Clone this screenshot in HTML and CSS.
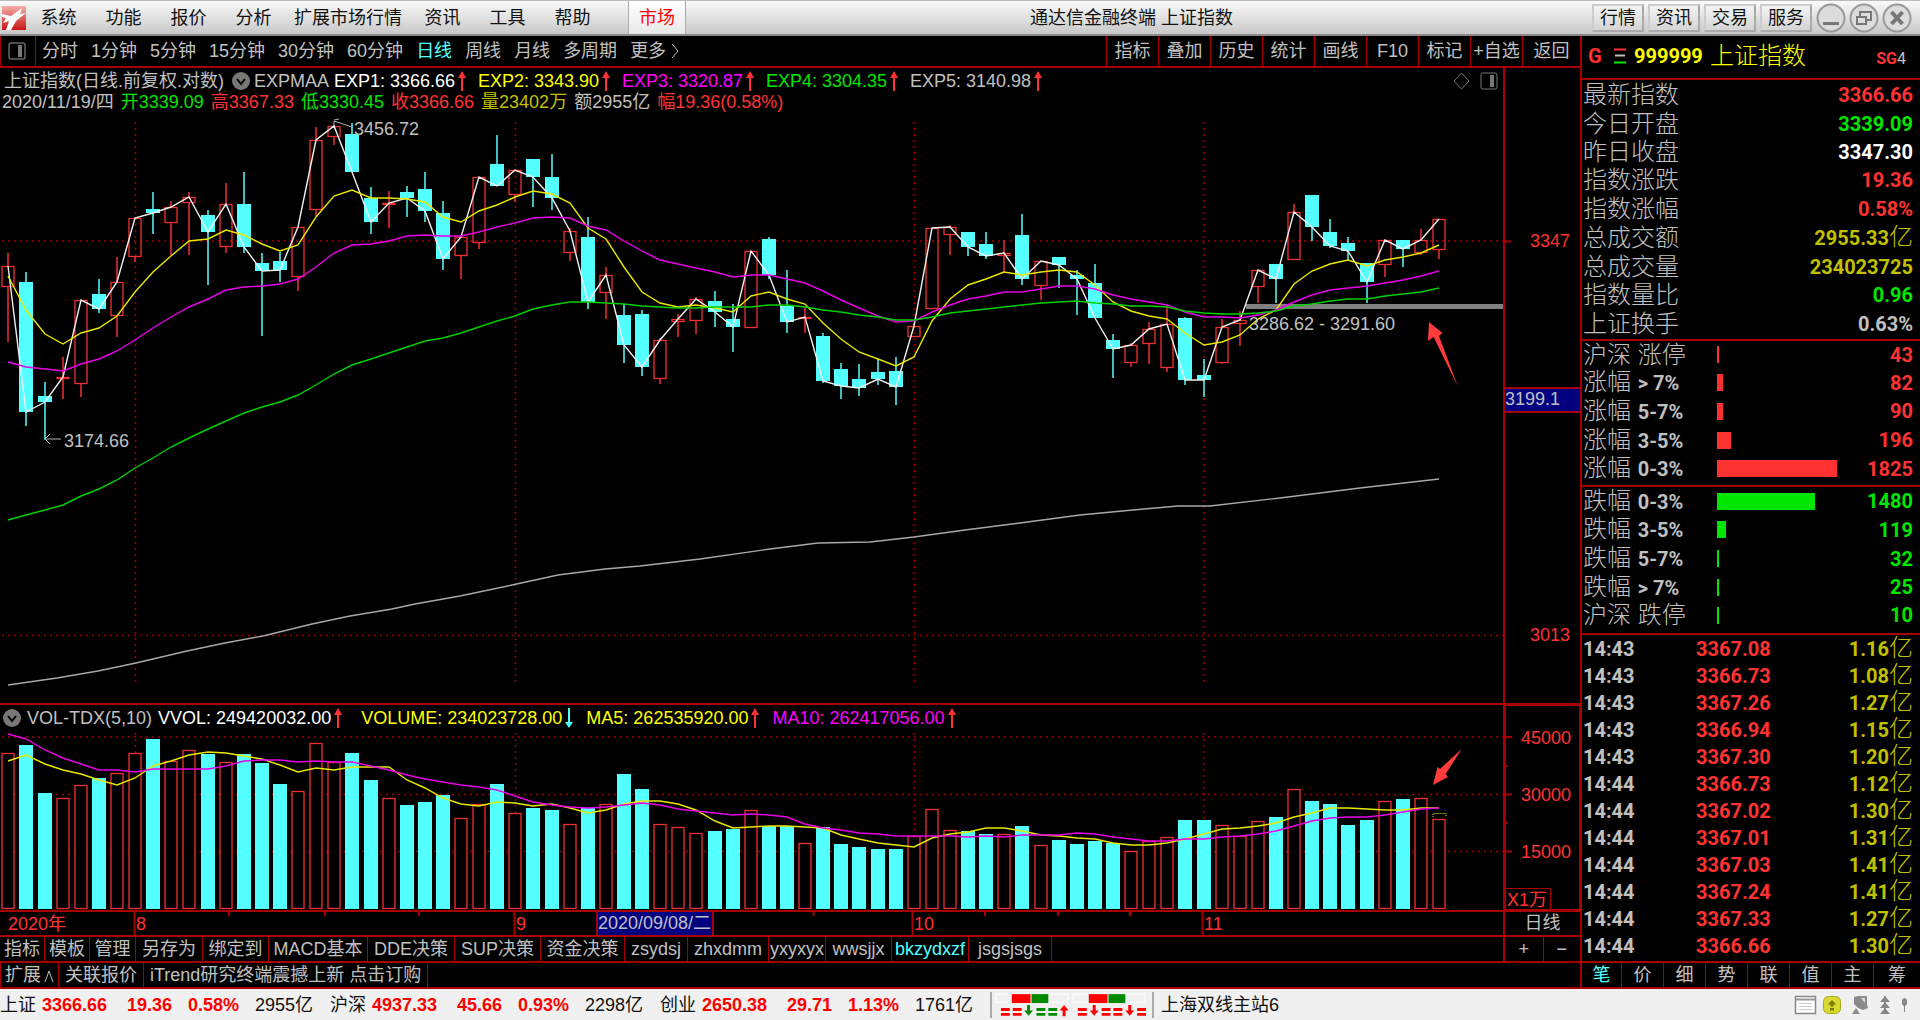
FILE: index.html
```html
<!DOCTYPE html>
<html lang="zh-CN">
<head>
<meta charset="utf-8">
<title>通达信金融终端 上证指数</title>
<link rel="stylesheet" href="styles.css">
</head>
<body>
<header class="menubar">
  <svg class="logo" viewBox="0 0 24 24" aria-hidden="true">
    <defs><linearGradient id="logoRed" x1="0" y1="0" x2="0" y2="1"><stop offset="0" stop-color="#f2b0a8"/><stop offset="1" stop-color="#c81414"/></linearGradient></defs>
    <rect width="24" height="24" fill="url(#logoRed)"/>
    <path d="M0 8 L9 10 L20 2 L18 8 L24 7 L14 15 L9 24 L4 24 L7 15 L1 17 L4 12 L0 11 Z" fill="#fff"/>
  </svg>
  <nav class="menu">
    <button>系统</button><button>功能</button><button>报价</button><button>分析</button><button>扩展市场行情</button><button>资讯</button><button>工具</button><button>帮助</button>
  </nav>
  <button class="market">市场</button>
  <h1 class="title">通达信金融终端 上证指数</h1>
  <div class="quick">
    <button>行情</button><button>资讯</button><button>交易</button><button>服务</button>
  </div>
  <div class="winctl">
    <button aria-label="最小化"><svg viewBox="0 0 30 30"><circle cx="15" cy="15" r="13.5"/><path class="thick" d="M7 20.500H23"/></svg></button>
    <button aria-label="还原"><svg viewBox="0 0 30 30"><circle cx="15" cy="15" r="13.5"/><path class="mid" d="M11 13V9H22V17H18M8 14H17V21H8Z"/></svg></button>
    <button aria-label="关闭"><svg viewBox="0 0 30 30"><circle cx="15" cy="15" r="13.5"/><path class="cross" d="M9.500 9L20.500 21M20.500 9L9.500 21"/></svg></button>
  </div>
</header>

<div class="workspace">
<main class="left">
  <div class="periods">
    <button class="dock" aria-label="面板"><svg viewBox="0 0 18 18"><rect x="1" y="1" width="16" height="16" rx="2" fill="none" stroke="#666" stroke-width="1.500"/><rect x="10" y="3" width="4" height="12" fill="#777"/></svg></button>
    <div class="periodlist">
      <button>分时</button><button>1分钟</button><button>5分钟</button><button>15分钟</button><button>30分钟</button><button>60分钟</button><button class="on">日线</button><button>周线</button><button>月线</button><button>多周期</button><button>更多 <svg class="more" viewBox="0 0 8 16"><path d="M1 1L7 8L1 15"/></svg></button>
    </div>
    <div class="tools">
      <button>指标</button><button>叠加</button><button>历史</button><button>统计</button><button>画线</button><button>F10</button><button>标记</button><button>+自选</button><button>返回</button>
    </div>
  </div>

  <section class="pane">
    <div class="plot">
      <div class="pricehead">
        <div class="line1">
          <span class="name">上证指数(日线.前复权.对数)</span>
          <svg class="chev" viewBox="0 0 18 18"><circle cx="9" cy="9" r="9"/><path d="M5 7L9 12L13 7"/></svg>
          <span class="exp">EXPMAA</span>
          <span class="ind white">EXP1: 3366.66<svg class="up" viewBox="0 0 8 20"><path d="M4 0L8 7H5V20H3V7H0Z"/></svg></span>
          <span class="ind yellow">EXP2: 3343.90<svg class="up" viewBox="0 0 8 20"><path d="M4 0L8 7H5V20H3V7H0Z"/></svg></span>
          <span class="ind magenta">EXP3: 3320.87<svg class="up" viewBox="0 0 8 20"><path d="M4 0L8 7H5V20H3V7H0Z"/></svg></span>
          <span class="ind green">EXP4: 3304.35<svg class="up" viewBox="0 0 8 20"><path d="M4 0L8 7H5V20H3V7H0Z"/></svg></span>
          <span class="ind">EXP5: 3140.98<svg class="up" viewBox="0 0 8 20"><path d="M4 0L8 7H5V20H3V7H0Z"/></svg></span>
          <svg class="corner" viewBox="0 0 46 20"><path d="M8.500 2L16 10L8.500 18L1 10Z"/><rect x="28" y="2" width="16" height="16" rx="2"/><rect x="37" y="4" width="4" height="12" fill="#777" stroke="none"/></svg>
        </div>
        <div class="line2">
          <span>2020/11/19/四</span><span class="green">开3339.09</span><span class="red">高3367.33</span><span class="green">低3330.45</span><span class="red">收3366.66</span><span class="olive">量23402万</span><span>额2955亿</span><span class="red">幅19.36(0.58%)</span>
        </div>
      </div>
      <svg class="chart" id="price" viewBox="0 110 1503 593"></svg>
    </div>
    <div class="axis">
      <svg class="chart" viewBox="1505 68 75 635">
        <path d="M1505 241.500H1511" stroke="#a80000" stroke-width="2"/>
        <text class="t red" x="1570" y="247" text-anchor="end">3347</text>
        <text class="t red" x="1570" y="641" text-anchor="end">3013</text>
        <rect x="1504" y="388" width="78" height="24" fill="#000080" stroke="#a80000" stroke-width="2"/>
        <text class="t" x="1505" y="405">3199.1</text>
      </svg>
    </div>
  </section>

  <section class="pane vol">
    <div class="plot">
      <div class="volhead">
        <svg class="chev" viewBox="0 0 18 18"><circle cx="9" cy="9" r="9"/><path d="M5 7L9 12L13 7"/></svg>
        <span class="vname">VOL-TDX(5,10)</span>
        <span class="ind white">VVOL: 249420032.00<svg class="up" viewBox="0 0 8 20"><path d="M4 0L8 7H5V20H3V7H0Z"/></svg></span>
        <span class="ind yellow">VOLUME: 234023728.00<svg class="down" viewBox="0 0 8 20"><path d="M4 20L8 14H5V0H3V14H0Z"/></svg></span>
        <span class="ind yellow">MA5: 262535920.00<svg class="up" viewBox="0 0 8 20"><path d="M4 0L8 7H5V20H3V7H0Z"/></svg></span>
        <span class="ind magenta">MA10: 262417056.00<svg class="up" viewBox="0 0 8 20"><path d="M4 0L8 7H5V20H3V7H0Z"/></svg></span>
      </div>
      <svg class="chart" id="volume" viewBox="0 731 1503 179"></svg>
    </div>
    <div class="axis boxed">
      <svg class="chart" viewBox="1506 706 73 203">
        <path d="M1506 737H1512M1506 794.500H1512M1506 851.500H1512M1506 766H1508M1506 823H1508" stroke="#a80000" stroke-width="2"/>
        <text class="t red" x="1571" y="744" text-anchor="end">45000</text>
        <text class="t red" x="1571" y="801" text-anchor="end">30000</text>
        <text class="t red" x="1571" y="858" text-anchor="end">15000</text>
        <path d="M1505 888.500H1550.500V909" fill="none" stroke="#a80000"/>
        <text class="t red" x="1507" y="906">X1万</text>
      </svg>
    </div>
  </section>

  <div class="dates">
    <svg class="chart" viewBox="0 912 1503 23">
      <path d="M134.500 912V935M514.500 912V935M912.500 912V935M1202.500 912V935M229 912V916M325 912V916M419 912V916M813.500 912V916M985 912V916M1058 912V916M1130 912V916" stroke="#a80000" stroke-width="2"/>
      <text class="t red" x="8" y="930">2020年</text>
      <text class="t red" x="136" y="930">8</text>
      <text class="t red" x="516" y="930">9</text>
      <text class="t red" x="914" y="930">10</text>
      <text class="t red" x="1204" y="930">11</text>
      <rect x="597" y="911" width="116" height="25" fill="#000080" stroke="#a80000" stroke-width="2"/>
      <text class="t" x="598" y="929">2020/09/08/二</text>
    </svg>
    <span class="unit">日线</span>
  </div>

  <div class="tplbar">
    <div class="tpls">
      <button>指标</button><button>模板</button><button>管理</button><button>另存为</button><button>绑定到</button><button>MACD基本</button><button>DDE决策</button><button>SUP决策</button><button>资金决策</button><button>zsydsj</button><button>zhxdmm</button><button>yxyxyx</button><button>wwsjjx</button><button class="on">bkzydxzf</button><button>jsgsjsgs</button>
    </div>
    <div class="zoomers"><button aria-label="放大">+</button><button aria-label="缩小">−</button></div>
  </div>

  <div class="extbar">
    <button>扩展<svg class="caret" viewBox="0 0 10 14"><path d="M1 13L5 2L9 13"/></svg></button><button>关联报价</button><button>iTrend研究终端震撼上新 点击订购</button>
  </div>
</main>

<aside class="right">
  <div class="stock">
    <b class="g">G</b>
    <svg class="bars" viewBox="0 0 12 16"><path d="M0 1.500H12" stroke="#ff3232"/><path d="M1 7.500H11" stroke="#c0c0c0"/><path d="M0 14.500H12" stroke="#00e600"/></svg>
    <b class="code">999999</b><span class="sname">上证指数</span><span class="sg"><b>SG</b>4</span>
  </div>
  <section class="quote">
    <table>
      <tr><th>最新指数</th><td class="red">3366.66</td></tr>
      <tr><th>今日开盘</th><td class="green">3339.09</td></tr>
      <tr><th>昨日收盘</th><td class="white">3347.30</td></tr>
      <tr><th>指数涨跌</th><td class="red">19.36</td></tr>
      <tr><th>指数涨幅</th><td class="red">0.58%</td></tr>
      <tr><th>总成交额</th><td class="olive">2955.33<i>亿</i></td></tr>
      <tr><th>总成交量</th><td class="olive">234023725</td></tr>
      <tr><th>指数量比</th><td class="green">0.96</td></tr>
      <tr><th>上证换手</th><td>0.63%</td></tr>
    </table>
  </section>
  <section class="breadth up-side">
    <table>
      <tr><th>沪深 涨停</th><td class="bar"><span style="width:2px"></span></td><td class="red">43</td></tr>
      <tr><th>涨幅 <b>&gt; 7%</b></th><td class="bar"><span style="width:6px"></span></td><td class="red">82</td></tr>
      <tr><th>涨幅 <b>5-7%</b></th><td class="bar"><span style="width:6px"></span></td><td class="red">90</td></tr>
      <tr><th>涨幅 <b>3-5%</b></th><td class="bar"><span style="width:14px"></span></td><td class="red">196</td></tr>
      <tr><th>涨幅 <b>0-3%</b></th><td class="bar"><span style="width:120px"></span></td><td class="red">1825</td></tr>
    </table>
  </section>
  <section class="breadth down-side">
    <table>
      <tr><th>跌幅 <b>0-3%</b></th><td class="bar"><span style="width:98px"></span></td><td class="green">1480</td></tr>
      <tr><th>跌幅 <b>3-5%</b></th><td class="bar"><span style="width:9px"></span></td><td class="green">119</td></tr>
      <tr><th>跌幅 <b>5-7%</b></th><td class="bar"><span style="width:2px"></span></td><td class="green">32</td></tr>
      <tr><th>跌幅 <b>&gt; 7%</b></th><td class="bar"><span style="width:2px"></span></td><td class="green">25</td></tr>
      <tr><th>沪深 跌停</th><td class="bar"><span style="width:2px"></span></td><td class="green">10</td></tr>
    </table>
  </section>
  <section class="ticks">
    <table>
      <tr><td>14:43</td><td class="red">3367.08</td><td class="olive">1.16<i>亿</i></td></tr>
      <tr><td>14:43</td><td class="red">3366.73</td><td class="olive">1.08<i>亿</i></td></tr>
      <tr><td>14:43</td><td class="red">3367.26</td><td class="olive">1.27<i>亿</i></td></tr>
      <tr><td>14:43</td><td class="red">3366.94</td><td class="olive">1.15<i>亿</i></td></tr>
      <tr><td>14:43</td><td class="red">3367.30</td><td class="olive">1.20<i>亿</i></td></tr>
      <tr><td>14:44</td><td class="red">3366.73</td><td class="olive">1.12<i>亿</i></td></tr>
      <tr><td>14:44</td><td class="red">3367.02</td><td class="olive">1.30<i>亿</i></td></tr>
      <tr><td>14:44</td><td class="red">3367.01</td><td class="olive">1.31<i>亿</i></td></tr>
      <tr><td>14:44</td><td class="red">3367.03</td><td class="olive">1.41<i>亿</i></td></tr>
      <tr><td>14:44</td><td class="red">3367.24</td><td class="olive">1.41<i>亿</i></td></tr>
      <tr><td>14:44</td><td class="red">3367.33</td><td class="olive">1.27<i>亿</i></td></tr>
      <tr><td>14:44</td><td class="red">3366.66</td><td class="olive">1.30<i>亿</i></td></tr>
    </table>
  </section>
  <div class="sidetabs">
    <button class="on">笔</button><button>价</button><button>细</button><button>势</button><button>联</button><button>值</button><button>主</button><button>筹</button>
  </div>
</aside>
</div>

<footer class="status">
  <div class="idx"><span>上证</span><b>3366.66</b><b>19.36</b><b>0.58%</b><span>2955亿</span></div>
  <div class="idx"><span>沪深</span><b>4937.33</b><b>45.66</b><b>0.93%</b><span>2298亿</span></div>
  <div class="idx"><span>创业</span><b>2650.38</b><b>29.71</b><b>1.13%</b><span>1761亿</span></div>
  <svg class="gauge" viewBox="0 0 156 24">
    <g stroke="#fff" fill="#f0f0f0"><rect x="1" y="1" width="73" height="8"/><rect x="79" y="1" width="73" height="8"/></g>
    <g fill="#f00"><rect x="17" y="1" width="19" height="9"/><rect x="95" y="1" width="19" height="9"/></g>
    <g fill="#008a00"><rect x="37" y="1" width="17" height="9"/><rect x="115" y="1" width="17" height="9"/></g>
    <path fill="#f00" d="M6 15h9v3h-9zM6 20h9v3h-9zM18 15h9v3h-9zM18 20h9v3h-9zM70 12l4.500 5.500h-3v6h-3v-6h-3zM84 15h9v3h-9zM84 20h9v3h-9zM99 12h3v5.500h3l-4.500 5.500l-4.500-5.500h3zM108 15h9v3h-9zM108 20h9v3h-9zM120 15h9v3h-9zM120 20h9v3h-9zM135 12h3v5.500h3l-4.500 5.500l-4.500-5.500h3zM144 15h9v3h-9zM144 20h9v3h-9z"/>
    <path fill="#008a00" d="M32.500 12h3v5.500h3l-4.500 5.500l-4.500-5.500h3zM42 15h9v3h-9zM42 20h9v3h-9zM54 15h9v3h-9zM54 20h9v3h-9z"/>
  </svg>
  <span class="site">上海双线主站6</span>
  <svg class="tray" viewBox="0 0 116 20">
    <rect x="1.500" y="1.500" width="20" height="17" fill="#fff" stroke="#888" stroke-width="1.500"/><path d="M2 4.500H21" stroke="#999" stroke-width="2"/><path d="M5 8.500H18M5 11.500H18M5 14.500H18" stroke="#ccc"/>
    <rect x="29.500" y="1.500" width="17" height="17" rx="5" fill="#d8d832" stroke="#a8a820"/><path d="M38 5L42 9.500H39.500V11.500H36.500V9.500H34ZM36 13H40V15.500H36Z" fill="#77770a"/>
    <path d="M60 2L64 1L73 1V9L74 13L69 15L64 13L60 9ZM58 19L62 13L66 19Z" fill="#8a8a8a"/><path d="M67 3H71V8Z" fill="#ddd"/>
    <path d="M91 1L96 7H86ZM91 7L96 13H86ZM91 13L96 19H86ZM90 1H92V19H90Z" fill="#888"/>
    <path d="M108 5Q110.500 1 113 5V9L111.500 11H109.500L108 9ZM110 11H111V17H110Z" fill="#888"/>
  </svg>
</footer>
<script src="chart.js"></script>
</body>
</html>
```
FILE: styles.css
```css
* { box-sizing: border-box; }
:root { --line: #a80000; --red: #ff3232; --cyan: #54ffff; --grey: #c0c0c0; }
body {
  margin: 0; min-height: 100vh; display: flex; flex-direction: column;
  background: #000; color: var(--grey);
  font: 18px/20px "Liberation Sans", "Noto Sans CJK SC", sans-serif;
  white-space: nowrap;
}
b { font-weight: 700; }
button { font: inherit; color: inherit; background: none; border: 0; padding: 0; margin: 0; white-space: nowrap; }
svg { display: block; flex: none; }
.red { color: var(--red); fill: var(--red); }
.green { color: #00e600; }
.white { color: #fff; }
.yellow { color: #ff0; }
.magenta { color: #f0f; }
.olive { color: #c0c000; }
.on { color: var(--cyan); }

.menubar {
  height: 36px; display: flex; align-items: center;
  background: linear-gradient(#fafafa, #c8c8c8); color: #111;
  border-top: 1px solid #bbb; border-bottom: 2px solid #888;
}
.logo { width: 24px; height: 24px; margin-left: 2px; }
.menu { display: flex; }
.menu button { min-width: 65px; padding: 0 8px; }
.market { width: 58px; height: 33px; margin-left: 23px; color: #f00; border: 1px solid #aaa; border-width: 0 1px; background: linear-gradient(#fff, #e8e8e8); }
.title { margin: 0; font: inherit; flex: 1; padding-left: 344px; }
.quick { display: flex; gap: 4px; }
.quick button { width: 52px; height: 28px; border: 2px solid #aaa; border-top-color: #ccc; border-left-color: #ccc; background: linear-gradient(#f4f4f4, #d4d4d4); }
.winctl { display: flex; gap: 3px; margin: 0 8px 0 4px; }
.winctl svg { width: 30px; height: 30px; fill: #dcdcdc; stroke: #999; stroke-width: 2; }
.winctl path { stroke: #777; fill: none; }
.winctl .thick { stroke-width: 3; }
.winctl .cross { stroke-width: 4; }

.workspace { flex: 1; display: grid; grid-template-columns: minmax(0, 1fr) 340px; }
.left { display: flex; flex-direction: column; min-width: 0; }
.periods { height: 32px; display: flex; border-bottom: 2px solid var(--line); }
.dock { width: 36px; border: 1px solid var(--line); border-width: 0 1px; display: grid; place-items: center start; padding-left: 7px; }
.dock svg { width: 18px; height: 18px; }
.periodlist { flex: 1; display: flex; gap: 13px; padding-left: 6px; }
.more { display: inline-block; width: 8px; height: 16px; vertical-align: -2px; fill: none; stroke: var(--grey); }
.tools { width: 474px; display: grid; grid-template-columns: repeat(8, 52px) 1fr; }
.tools button { border-left: 1px solid var(--line); }

.pane { display: grid; grid-template-columns: minmax(0, 1fr) 77px; }
.vol { border-top: 2px solid var(--line); }
.axis { border-left: 2px solid var(--line); }
.axis.boxed { border: 3px solid var(--line); border-width: 1px 1px 1px 3px; }
.chart { width: 100%; height: auto; overflow: hidden; }
.t { font-size: 18px; fill: var(--grey); }
.t.red { fill: var(--red); }

.pricehead { height: 42px; padding-top: 3px; }
.line1 { display: flex; align-items: center; height: 20px; padding-left: 4px; }
.name { width: 228px; }
.chev { width: 18px; height: 18px; fill: #777; }
.chev path { fill: none; stroke: #000; stroke-width: 2; }
.exp { width: 80px; margin-left: 4px; }
.ind { display: flex; align-items: center; }
.line1 .ind { width: 144px; }
.up, .down { width: 8px; height: 20px; margin-left: 3px; fill: var(--red); }
.down { fill: var(--cyan); }
.corner { width: 46px; height: 20px; margin-left: auto; margin-right: 4px; fill: none; stroke: #777; stroke-width: 1px; }
.line2 { display: flex; gap: 7px; padding-left: 2px; margin-top: 1px; }
.volhead { height: 26px; display: flex; align-items: center; padding-left: 3px; }
.volhead .ind { margin-right: 19px; }
.volhead .ind:nth-of-type(3) { margin-right: 13px; }
.volhead .ind:nth-of-type(4) { margin-right: 13px; }
.vname { margin: 0 6px 0 6px; }

.dates { display: grid; grid-template-columns: minmax(0, 1fr) 77px; border-top: 2px solid var(--line); }
.unit { border-left: 2px solid var(--line); text-align: center; line-height: 23px; }
.tplbar { display: flex; height: 26px; border-top: 2px solid var(--line); }
.tpls { flex: 1; display: grid; grid-template-columns: 45px 45px 46px 67px 66px 99px 87px 86px 84px 63px 81px 57px 66px 77px 83px; }
.tpls button { border-right: 1px solid var(--line); }
.zoomers { width: 77px; display: grid; grid-template-columns: 1fr 1fr; border-left: 2px solid var(--line); }
.zoomers button + button { border-left: 1px solid var(--line); }
.extbar { display: flex; height: 28px; border: 2px solid var(--line); border-width: 2px 0 2px 1px; }
.extbar button { padding: 0 6px; border-right: 1px solid var(--line); }
.extbar button:first-child { padding: 0 4px; }
.caret { display: inline-block; width: 10px; height: 14px; margin-left: 3px; vertical-align: -2px; fill: none; stroke: var(--grey); }

.right { display: flex; flex-direction: column; border-left: 2px solid var(--line); }
.stock { height: 44px; display: flex; align-items: center; padding: 0 14px 2px 6px; border-bottom: 2px solid var(--line); color: #ff0; }
.g { color: var(--red); width: 26px; font: 700 20px/24px Roboto, sans-serif; }
.bars { width: 12px; height: 16px; margin-right: 8px; stroke-width: 2; }
.code { font: 700 20px/24px Roboto, sans-serif; width: 76px; }
.sname { font-size: 24px; line-height: 24px; font-weight: 300; }
.sg { margin-left: auto; color: var(--grey); font: 16px/20px Roboto, sans-serif; padding-top: 6px; }
.sg b { color: var(--red); }
.right table { width: 100%; border-collapse: collapse; table-layout: fixed; }
.right th, .right td { padding: 0; line-height: 24px; }
.right th { text-align: left; font-weight: 300; font-size: 24px; }
.right td, .right th b { font-family: Roboto, "Noto Sans CJK SC", sans-serif; font-size: 20px; font-weight: 700; }
.right td { text-align: right; }
.right td i { font-size: 24px; font-weight: 300; font-style: normal; line-height: 24px; }
.right section { border-bottom: 2px solid var(--line); padding: 0 7px 0 1px; }
.right .quote { height: 261px; padding-top: 1px; }
.quote table { height: 257px; }
.breadth table { height: 142px; }
.up-side { height: 146px; }
.down-side { height: 148px; }
.breadth th { width: 134px; }
.right .bar { width: 140px; text-align: left; }
.bar span { display: block; height: 17px; background: var(--red); }
.down-side .bar span { background: #00e600; }
.ticks { flex: 1; }
.ticks tr { height: 27px; }
.ticks td:first-child { text-align: left; width: 113px; }
.ticks td:nth-child(2) { text-align: left; width: 90px; }
.sidetabs { height: 26px; display: grid; grid-template-columns: 39px repeat(6, 42px) 1fr; border-bottom: 2px solid var(--line); }
.sidetabs button + button { border-left: 1px solid var(--line); }

.status { height: 31px; display: flex; align-items: center; background: #f0f0f0; color: #111; }
.idx { display: grid; grid-template-columns: 42px 85px 61px 67px 75px; }
.idx b { color: #f00; }
.gauge { width: 164px; height: 26px; padding: 0 3px; border: 1px solid #aaa; border-width: 0 2px; }
.site { margin-left: 7px; }
.tray { width: 116px; height: 20px; margin-left: auto; margin-right: 10px; }
```
FILE: chart.js
```js
// Candles: [kind, high, body top, body bottom, low]; kind 1 rises, 0 falls.
const candles = [
[1,253,266,287,342],[0,272,282,412,426],[0,382,396,402,440],[1,357,377,379,399],[1,300,300,384,397],[0,279,294,309,313],[1,257,282,316,337],[1,218,218,257,262],
[0,192,209,213,234],[1,201,207,223,255],[1,192,197,203,255],[0,210,215,232,285],[1,183,204,247,253],[0,172,204,247,253],[0,253,263,271,336],[0,252,261,270,282],
[1,227,227,277,291],[1,127,140,210,216],[1,125,126,137,145],[0,123,134,172,172],[0,187,198,222,234],[1,191,203,205,228],[0,186,192,198,217],[0,172,189,211,222],
[0,201,213,259,270],[1,237,237,256,279],[1,177,177,243,249],[0,135,164,186,186],[1,170,170,195,202],[0,159,159,177,207],[0,154,177,198,210],[1,228,231,253,261],
[0,217,237,302,309],[1,267,275,293,319],[0,304,315,345,363],[0,310,314,367,376],[1,338,340,379,384],[1,314,319,322,337],[1,297,299,321,334],[0,291,301,312,327],
[0,304,319,327,352],[1,251,251,328,328],[0,237,239,275,279],[0,270,306,322,333],[1,307,317,319,333],[0,333,336,381,383],[0,363,369,386,399],[0,364,379,388,396],
[0,359,372,379,385],[0,357,371,387,405],[1,323,326,337,337],[1,228,228,309,309],[1,225,227,235,255],[0,232,232,247,256],[0,232,244,256,259],[1,240,253,256,272],
[0,214,235,279,285],[1,261,261,286,300],[0,257,257,265,288],[0,270,275,279,315],[0,264,283,318,318],[0,334,340,349,378],[1,343,345,363,367],[1,322,329,344,364],
[1,307,324,368,372],[0,317,318,380,385],[0,359,375,380,397],[1,319,327,363,364],[1,311,320,324,346],[1,270,270,287,303],[0,264,264,279,303],[1,204,212,260,260],
[0,195,195,227,241],[0,219,232,246,248],[0,237,243,251,261],[0,263,263,282,303],[1,240,240,265,277],[0,240,240,249,267],[1,229,240,253,255],[1,219,219,250,259]];
const exp2 = [276,310,334,344,333,328,316,292,272,256,241,239,230,235,244,251,245,217,196,190,198,198,199,202,217,222,211,205,197,191,194,203,228,239,267,292,303,307,305,308,312,296,292,299,304,323,339,352,359,366,357,321,299,285,279,272,275,272,270,272,285,302,311,316,319,333,345,342,335,319,310,284,271,264,260,266,260,257,253,245];
const exp3 = [362,367,369,371,364,359,351,340,328,317,307,299,290,287,286,284,279,267,253,245,244,241,236,235,236,236,232,227,223,218,217,218,226,230,241,251,260,264,268,272,277,275,275,279,283,291,300,308,316,322,321,312,305,299,296,292,292,289,286,286,289,295,299,302,305,312,317,317,318,315,310,302,295,290,288,286,283,280,276,271];
const exp4 = [520,515,510,505,496,489,480,468,458,447,438,429,421,413,407,402,395,385,374,365,359,353,347,341,338,333,327,321,316,309,305,302,302,303,304,306,307,308,308,307,307,307,305,305,307,310,312,315,317,320,320,317,313,311,309,307,305,303,302,301,303,304,306,306,307,311,313,314,314,313,311,306,304,301,299,299,296,294,292,288];
const exp5 = "8,685 57,678 98,671 136,663 187,651 225,643 263,636 312,624 350,616 392,609 415,604 460,596 512,585 558,575 605,569 640,566 700,559 770,549 818,543 870,542 914,537 965,530 1020,523 1080,515 1133,510 1178,506 1210,506 1280,498 1360,488 1439,479";
const volTop = [753,745,793,798,785,778,773,753,739,761,750,754,762,754,763,784,791,743,762,753,780,798,805,802,795,818,804,784,813,808,810,824,808,804,774,789,824,827,833,831,829,810,826,826,843,827,844,847,849,849,836,809,830,831,834,834,826,845,840,844,841,843,851,841,837,820,820,825,836,821,817,789,801,804,825,820,801,799,798,819];
const ma5 = [761,755,764,770,774,780,785,778,766,761,755,752,753,756,759,765,772,768,770,767,767,767,780,788,798,804,806,802,803,806,804,808,813,810,804,801,801,804,810,821,828,827,826,826,827,828,835,839,843,845,847,838,834,832,828,828,831,835,836,838,839,843,845,845,843,839,834,829,828,826,823,817,813,808,808,809,810,810,808,808];
const ma10 = [734,739,750,758,764,770,770,772,769,769,769,769,766,761,760,760,762,761,762,762,766,770,775,779,782,785,787,790,796,802,805,807,808,807,805,803,805,809,811,813,815,814,815,817,824,828,830,833,834,836,836,836,836,837,836,837,835,835,835,833,834,837,839,841,841,839,839,837,836,834,831,826,821,818,817,817,815,812,809,808];

const cx = i => Math.round(8.3 + i * 18.11);
const CY = "#54ffff", RD = "#f03030", GRID = "#a00000";
const poly = (ys, color) => `<polyline fill="none" stroke="${color}" stroke-width="1.4" points="${ys.map((y, i) => cx(i) + "," + y).join(" ")}"/>`;
const dots = d => `<path d="${d}" fill="none" stroke="${GRID}" stroke-width="1.5" stroke-dasharray="2 4"/>`;

let p = dots("M2 241H1503M2 635.500H1503M135.500 122V684M515.500 122V684M914.500 122V684M1204 122V684");
p += `<path d="M1246 306.500H1503" stroke="#808080" stroke-width="5"/>`;
candles.forEach(([up, h, t, b, l], i) => {
  const x = cx(i);
  if (up) {
    p += `<path d="M${x} ${h}V${t}M${x} ${b}V${l}" stroke="${RD}" stroke-width="1.5"/>`;
    p += `<rect x="${x - 6}" y="${t + .5}" width="12" height="${Math.max(1, b - t - 1)}" fill="none" stroke="${RD}" stroke-width="1.3"/>`;
  } else {
    p += `<path d="M${x} ${h}V${l}" stroke="${CY}" stroke-width="1.5"/><rect x="${x - 7}" y="${t}" width="14" height="${b - t}" fill="${CY}"/>`;
  }
});
p += poly(candles.map(c => c[0] ? c[2] : c[3]), "#f0f0f0") + poly(exp2, "#e8e800") + poly(exp3, "#e800e8") + poly(exp4, "#00d000");
p += `<polyline fill="none" stroke="#a8a8a8" stroke-width="1.4" points="${exp5}"/>`;
p += `<path d="M45 439H61M45 439L50 434M45 439L50 444M334 121L352 127M334 121V126M334 120L339 119" fill="none" stroke="#b0b0b0"/>`;
p += `<text class="t" x="64" y="447">3174.66</text><text class="t" x="354" y="135">3456.72</text><text class="t" x="1249" y="330">3286.62 - 3291.60</text>`;
p += `<path d="M1429 322L1442.500 333L1439 336L1457.600 386L1433.600 337L1428 341Z" fill="#ff3b3b"/>`;
document.getElementById("price").innerHTML = p;

let v = dots("M2 737H1503M2 794.500H1503M2 851.500H1503M135.500 733V753M515.500 733V813M914.500 733V836M1204 733V820");
volTop.forEach((t, i) => {
  const x = cx(i);
  v += candles[i][0]
    ? `<rect x="${x - 6}" y="${t + .5}" width="12" height="${908 - t}" fill="#000" stroke="${RD}" stroke-width="1.3"/>`
    : `<rect x="${x - 7}" y="${t}" width="14" height="${909 - t}" fill="${CY}"/>`;
});
v += poly(ma5, "#e8e800") + poly(ma10, "#e800e8");
v += `<path d="M1433 817V813.500H1446V817" fill="none" stroke="#e8e800" stroke-dasharray="1 1"/>`;
v += `<path d="M1433 785L1448 777L1445.700 774L1461.600 749L1440 769L1437.500 767Z" fill="#ff3b3b"/>`;
document.getElementById("volume").innerHTML = v;
```
